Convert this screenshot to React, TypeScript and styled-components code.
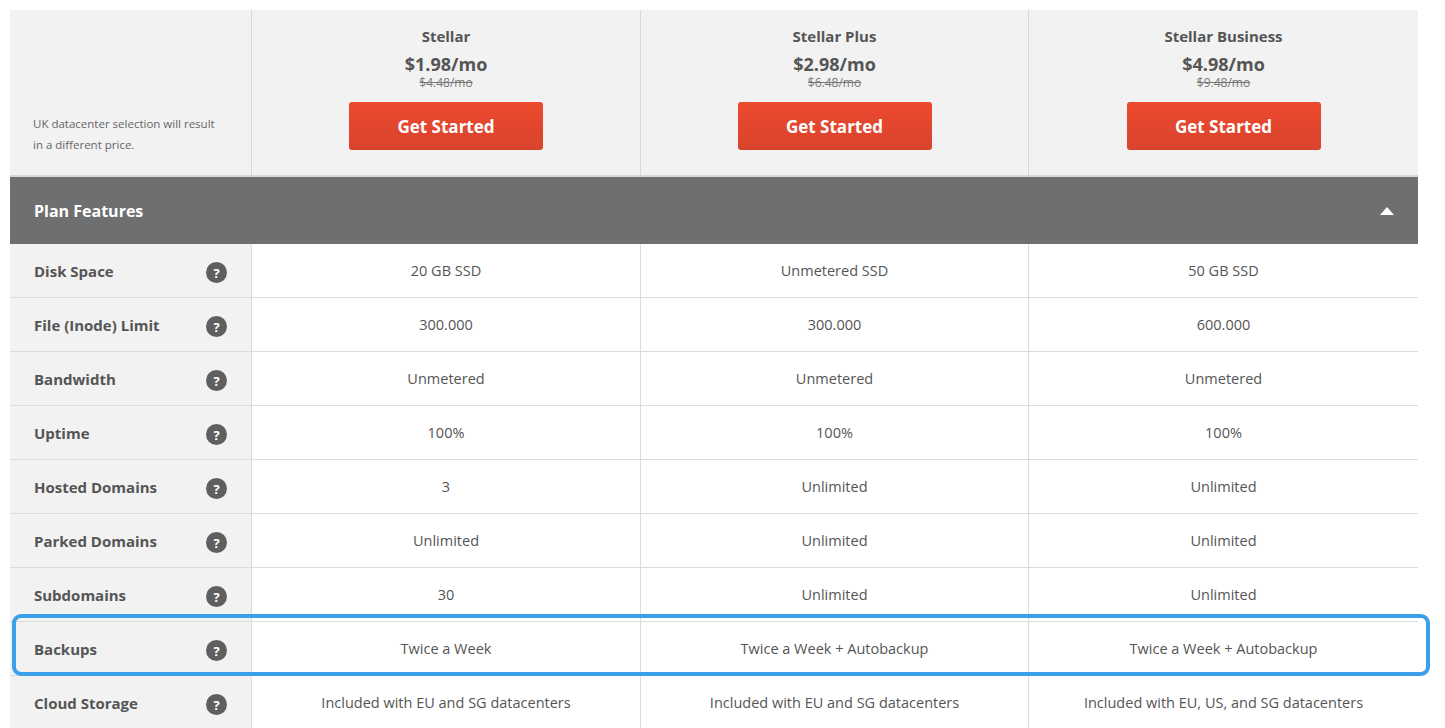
import React from "react";
import styled, { createGlobalStyle } from "styled-components";

const Global = createGlobalStyle`
  body { margin: 0; background: #fff; font-family: "Open Sans", Lato, sans-serif; color: #555; }
`;

const Page = styled.div`
  padding: 10px 27px 0 10px;
  position: relative;
  height: 718px;
  overflow: hidden;
`;

const Table = styled.div`
  width: 1408px;
`;

const Grid = styled.div`
  display: grid;
  grid-template-columns: 241px 389px 388px 390px;
`;

const HeadLabel = styled.div`
  background: #f2f2f2;
  height: 165px;
  border-bottom: 2px solid #d8d8d8;
  display: flex;
  align-items: flex-end;
  padding: 0 20px 20px 23px;
  font-size: 11.5px;
  line-height: 21px;
  color: #666;
  box-sizing: border-box;
  height: 167px;
`;

const HeadPlan = styled.div`
  background: #f2f2f2;
  border-left: 1px solid #d8d8d8;
  border-bottom: 2px solid #d8d8d8;
  height: 167px;
  box-sizing: border-box;
  display: flex;
  flex-direction: column;
  align-items: center;
  padding-top: 16px;
`;

const PlanName = styled.div`
  font-size: 15px;
  font-weight: 700;
  color: #555;
  line-height: 20px;
`;

const Price = styled.div`
  font-size: 18px;
  font-weight: 700;
  color: #555;
  line-height: 24px;
  margin-top: 6px;
`;

const OldPrice = styled.div`
  font-size: 12px;
  color: #777;
  text-decoration: line-through;
  line-height: 14px;
`;

const Button = styled.button`
  margin-top: 12px;
  width: 194px;
  height: 48px;
  border: none;
  border-radius: 3px;
  background: linear-gradient(#ec4a2f, #d9432c);
  color: #fff;
  font-family: inherit;
  font-weight: 700;
  font-size: 17px;
`;

const Section = styled.div`
  background: #6e6f70;
  height: 67px;
  display: flex;
  align-items: center;
  justify-content: space-between;
  padding: 0 24px;
  color: #fff;
  font-weight: 700;
  font-size: 16px;
`;

const Arrow = styled.div`
  width: 0;
  height: 0;
  border-left: 7px solid transparent;
  border-right: 7px solid transparent;
  border-bottom: 8px solid #fff;
`;

const Label = styled.div`
  background: #f2f2f2;
  height: 54px;
  box-sizing: border-box;
  border-bottom: 1px solid #dcdcdc;
  display: flex;
  align-items: center;
  justify-content: space-between;
  padding: 0 24px 0 24px;
  font-weight: 700;
  font-size: 15px;
  color: #555;
`;

const Help = styled.span`
  width: 21px;
  height: 21px;
  border-radius: 50%;
  background: #5f5f5f;
  color: #fff;
  font-size: 13px;
  font-weight: 700;
  display: flex;
  align-items: center;
  justify-content: center;
  margin-top: 4px;
`;

const Cell = styled.div`
  height: 54px;
  box-sizing: border-box;
  border-left: 1px solid #dcdcdc;
  border-bottom: 1px solid #dcdcdc;
  display: flex;
  align-items: center;
  justify-content: center;
  font-size: 14.5px;
  color: #555;
`;

const Highlight = styled.div`
  position: absolute;
  left: 12px;
  top: 614px;
  width: 1418px;
  height: 62px;
  border: 4px solid #3aa0ea;
  border-radius: 9px;
  box-sizing: border-box;
  pointer-events: none;
`;

const plans = [
  { name: "Stellar", price: "$1.98/mo", old: "$4.48/mo" },
  { name: "Stellar Plus", price: "$2.98/mo", old: "$6.48/mo" },
  { name: "Stellar Business", price: "$4.98/mo", old: "$9.48/mo" },
];

const rows: [string, string, string, string][] = [
  ["Disk Space", "20 GB SSD", "Unmetered SSD", "50 GB SSD"],
  ["File (Inode) Limit", "300.000", "300.000", "600.000"],
  ["Bandwidth", "Unmetered", "Unmetered", "Unmetered"],
  ["Uptime", "100%", "100%", "100%"],
  ["Hosted Domains", "3", "Unlimited", "Unlimited"],
  ["Parked Domains", "Unlimited", "Unlimited", "Unlimited"],
  ["Subdomains", "30", "Unlimited", "Unlimited"],
  ["Backups", "Twice a Week", "Twice a Week + Autobackup", "Twice a Week + Autobackup"],
  ["Cloud Storage", "Included with EU and SG datacenters", "Included with EU and SG datacenters", "Included with EU, US, and SG datacenters"],
];

export default function App() {
  return (
    <>
      <Global />
      <Page>
        <Table>
          <Grid>
            <HeadLabel>
              <div>UK datacenter selection will result<br />in a different price.</div>
            </HeadLabel>
            {plans.map((p) => (
              <HeadPlan key={p.name}>
                <PlanName>{p.name}</PlanName>
                <Price>{p.price}</Price>
                <OldPrice>{p.old}</OldPrice>
                <Button>Get Started</Button>
              </HeadPlan>
            ))}
          </Grid>
          <Section>
            <span>Plan Features</span>
            <Arrow />
          </Section>
          <Grid>
            {rows.map((r) => (
              <React.Fragment key={r[0]}>
                <Label>
                  <span>{r[0]}</span>
                  <Help>?</Help>
                </Label>
                <Cell>{r[1]}</Cell>
                <Cell>{r[2]}</Cell>
                <Cell>{r[3]}</Cell>
              </React.Fragment>
            ))}
          </Grid>
        </Table>
        <Highlight />
      </Page>
    </>
  );
}
